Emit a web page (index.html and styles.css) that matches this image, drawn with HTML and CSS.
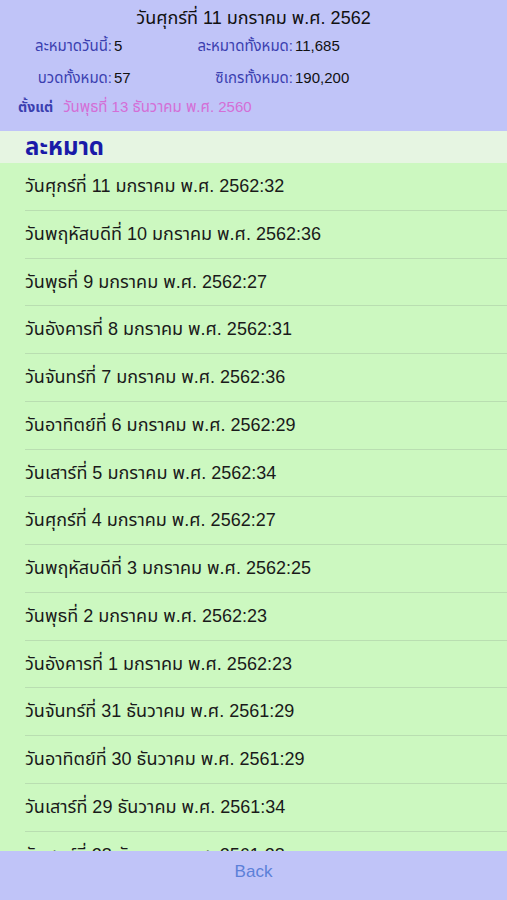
FILE: index.html
```html
<!DOCTYPE html>
<html lang="th">
<head>
<meta charset="utf-8">
<link rel="stylesheet" href="styles.css">
</head>
<body>
<div class="app">
  <header class="top">
    <div class="title">วันศุกร์ที่ 11 มกราคม พ.ศ. 2562</div>
    <div class="stats">
      <div class="lab">ละหมาดวันนี้:</div><div class="val">5</div>
      <div class="lab">ละหมาดทั้งหมด:</div><div class="val">11,685</div>
    </div>
    <div class="stats">
      <div class="lab">บวดทั้งหมด:</div><div class="val">57</div>
      <div class="lab">ซิเกรทั้งหมด:</div><div class="val">190,200</div>
    </div>
    <div class="since"><span class="since-lab">ตั้งแต่</span><span class="since-val">วันพุธที่ 13 ธันวาคม พ.ศ. 2560</span></div>
  </header>
  <div class="section">ละหมาด</div>
  <ul class="list">
    <li>วันศุกร์ที่ 11 มกราคม พ.ศ. 2562:32</li>
    <li>วันพฤหัสบดีที่ 10 มกราคม พ.ศ. 2562:36</li>
    <li>วันพุธที่ 9 มกราคม พ.ศ. 2562:27</li>
    <li>วันอังคารที่ 8 มกราคม พ.ศ. 2562:31</li>
    <li>วันจันทร์ที่ 7 มกราคม พ.ศ. 2562:36</li>
    <li>วันอาทิตย์ที่ 6 มกราคม พ.ศ. 2562:29</li>
    <li>วันเสาร์ที่ 5 มกราคม พ.ศ. 2562:34</li>
    <li>วันศุกร์ที่ 4 มกราคม พ.ศ. 2562:27</li>
    <li>วันพฤหัสบดีที่ 3 มกราคม พ.ศ. 2562:25</li>
    <li>วันพุธที่ 2 มกราคม พ.ศ. 2562:23</li>
    <li>วันอังคารที่ 1 มกราคม พ.ศ. 2562:23</li>
    <li>วันจันทร์ที่ 31 ธันวาคม พ.ศ. 2561:29</li>
    <li>วันอาทิตย์ที่ 30 ธันวาคม พ.ศ. 2561:29</li>
    <li>วันเสาร์ที่ 29 ธันวาคม พ.ศ. 2561:34</li>
    <li>วันศุกร์ที่ 28 ธันวาคม พ.ศ. 2561:28</li>
  </ul>
  <footer class="bottom">Back</footer>
</div>
</body>
</html>
```
FILE: styles.css
```css
html, body {
  margin: 0;
  padding: 0;
}
body {
  font-family: "Liberation Sans", "Noto Sans Thai", "DejaVu Sans", sans-serif;
  background: #ccf8c0;
}
.app {
  height: 900px;
  display: flex;
  flex-direction: column;
  overflow: hidden;
}
.top {
  background: #c0c4f8;
  height: 131px;
  box-sizing: border-box;
  padding-top: 6px;
  flex: none;
}
.title {
  text-align: center;
  font-size: 18px;
  line-height: 24px;
  color: #111;
}
.stats {
  display: grid;
  grid-template-columns: 112px 68px 113px 1fr;
  align-items: center;
  font-size: 15px;
  line-height: 20px;
  height: 32px;
}
.stats:first-of-type {
  margin-top: 3px;
}
.lab {
  text-align: right;
  color: #3b3fb0;
}
.val {
  color: #111;
  padding-left: 2px;
}
.since {
  font-size: 15px;
  line-height: 20px;
  padding-left: 18px;
  margin-top: 3px;
}
.since-lab {
  color: #3b3fb0;
  font-weight: 700;
  font-size: 14px;
  margin-right: 10px;
}
.since-val {
  color: #d46ed6;
}
.section {
  background: #e6f5e2;
  height: 32px;
  line-height: 32px;
  padding-left: 25px;
  font-size: 24px;
  font-weight: 700;
  color: #1a1aa8;
  flex: none;
}
.list {
  list-style: none;
  margin: 0;
  padding: 0;
  flex: 1;
  overflow: hidden;
  background: #ccf8c0;
}
.list li {
  height: 47.75px;
  box-sizing: border-box;
  margin-left: 25px;
  border-bottom: 1px solid #b9deb1;
  font-size: 18px;
  line-height: 46.75px;
  color: #1a1a1a;
  white-space: nowrap;
}
.bottom {
  flex: none;
  height: 49px;
  background: #c0c4f8;
  text-align: center;
  line-height: 42px;
  font-size: 17px;
  color: #5c80d8;
}
```
